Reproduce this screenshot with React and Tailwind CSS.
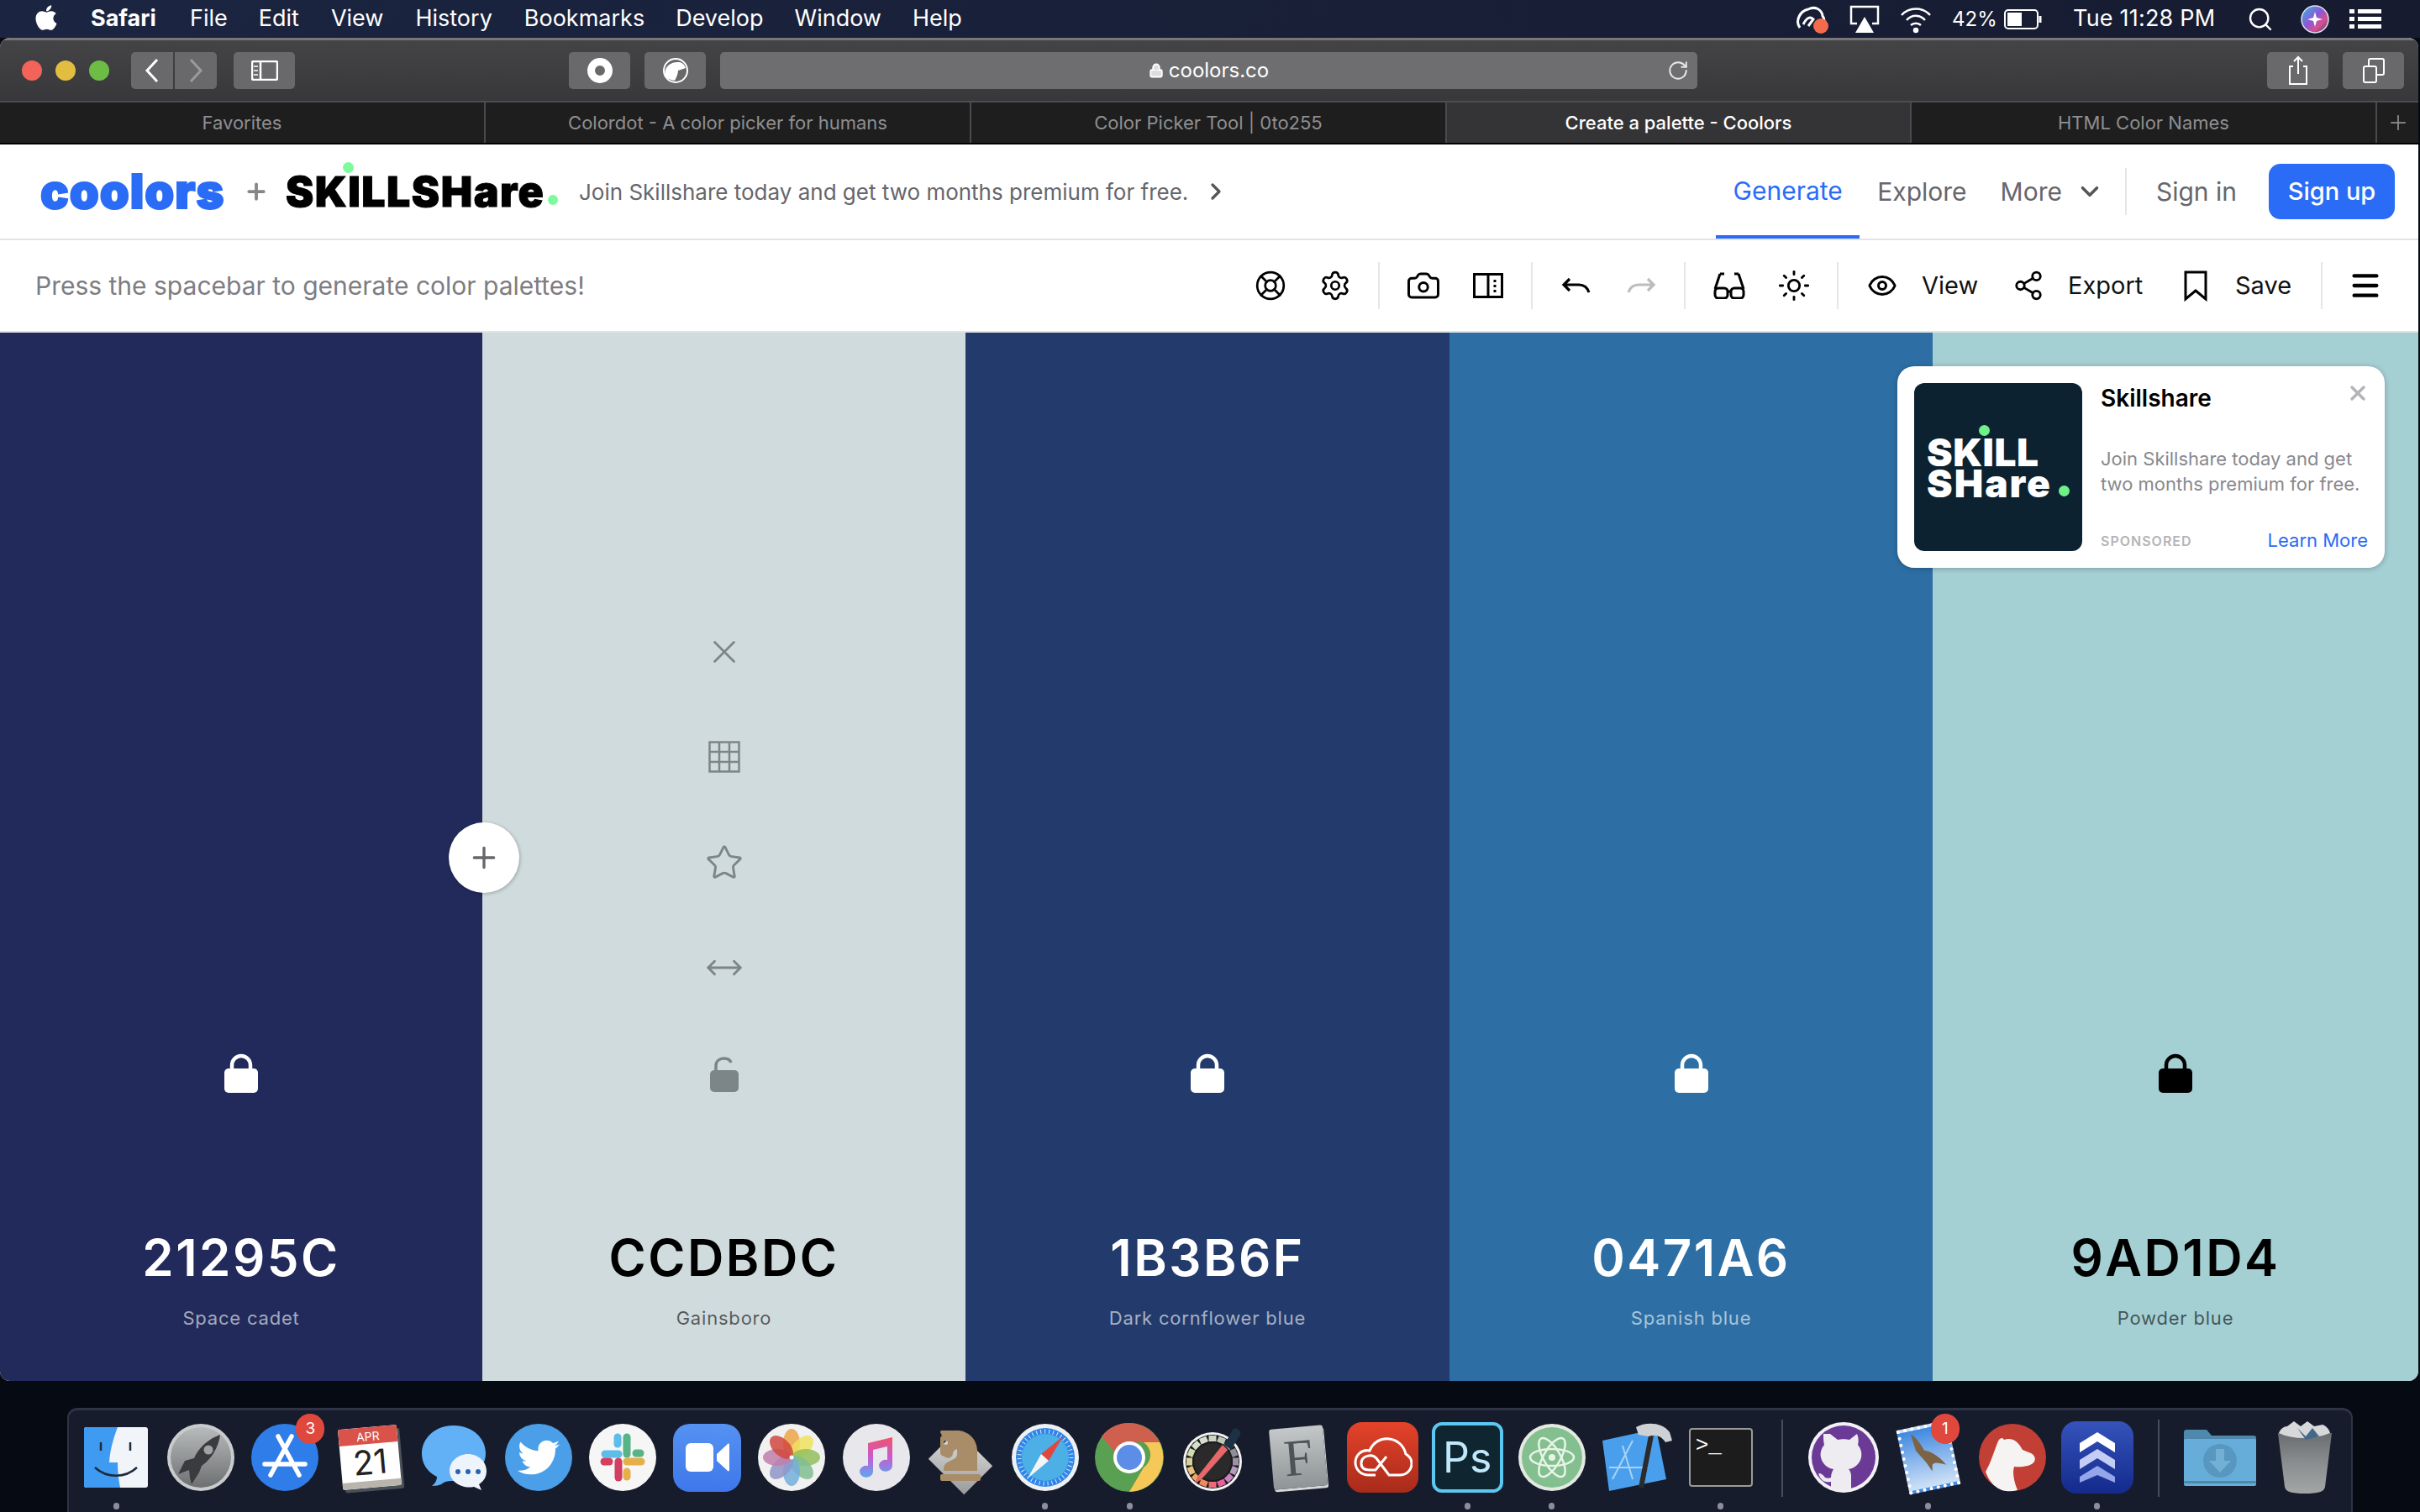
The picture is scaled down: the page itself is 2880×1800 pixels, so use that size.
import React from 'react';
import {
  Camera, ChevronDown, ChevronRight, Eye, LifeBuoy, Lock, Menu, MoveHorizontal, Plus,
  RotateCw, Search, Settings, Share2, Star, Sun, X,
} from 'lucide-react';
import { FaApple, FaChessKnight, FaTwitter } from 'react-icons/fa';

const menuItems = [
  ['File', 'ml-[37px]'], ['Edit', 'ml-[37px]'], ['View', 'ml-[38px]'], ['History', 'ml-[38px]'],
  ['Bookmarks', 'ml-[38px]'], ['Develop', 'ml-[37px]'], ['Window', 'ml-[37px]'], ['Help', 'ml-[37px]'],
];

const tabs = [
  ['Favorites', 'w-[578px]'],
  ['Colordot - A color picker for humans', 'w-[578px]'],
  ['Color Picker Tool | 0to255', 'w-[566px]'],
  ['Create a palette - Coolors', 'w-[553px]', true],
  ['HTML Color Names', 'w-[554px]'],
];

const colors = [
  { hex: '21295C', name: 'Space cadet', bg: 'bg-[#212a5a]', width: 'w-[574px]', hexText: 'text-white', nameText: 'text-white/60', lock: 'white' },
  { hex: 'CCDBDC', name: 'Gainsboro', bg: 'bg-[#d0dbdd]', width: 'w-[575px]', hexText: 'text-black', nameText: 'text-black/60', lock: 'open', tools: true },
  { hex: '1B3B6F', name: 'Dark cornflower blue', bg: 'bg-[#223b6c]', width: 'w-[576px]', hexText: 'text-white', nameText: 'text-white/60', lock: 'white' },
  { hex: '0471A6', name: 'Spanish blue', bg: 'bg-[#2d6fa4]', width: 'w-[575px]', hexText: 'text-white', nameText: 'text-white/60', lock: 'white' },
  { hex: '9AD1D4', name: 'Powder blue', bg: 'bg-[#a4cfd3]', width: 'flex-1', hexText: 'text-black', nameText: 'text-black/60', lock: 'black' },
];

function PadLock({ color = '#fff', open = false }) {
  return (
    <svg width="44" height="48" viewBox="0 0 44 48" fill="none">
      {open
        ? <path d="M12 22v-7c0-6 4.500-9 9.500-9 4 0 7.500 2 8.500 5" stroke={color} strokeWidth="3.500" />
        : <path d="M11 22v-8C11 8 16 3 22 3s11 5 11 11v8" stroke={color} strokeWidth="4.500" />}
      {open
        ? <rect x="5" y="20" width="34" height="26" rx="5" fill={color} />
        : <rect x="2" y="18" width="40" height="29" rx="5" fill={color} />}
    </svg>
  );
}

function Dot({ className }) {
  return <span className={`block h-[8px] w-[7px] rounded-full bg-[#8b8f9c] ${className || ''}`} />;
}

function Badge({ children }) {
  return (
    <span className="absolute right-[-6px] top-[-8px] flex h-[36px] w-[34px] items-center justify-center rounded-full bg-[#e0483d] text-[19px] text-white">
      {children}
    </span>
  );
}

function Finder() {
  return (
    <svg width="76" height="72" viewBox="0 0 76 72">
      <rect width="76" height="72" rx="3" fill="#f1f4f8" />
      <path d="M3 0h37c-6 16-9 28-10 42h10c0 10 1 20 3 30H3a3 3 0 0 1-3-3V3a3 3 0 0 1 3-3z" fill="#3f9bf2" />
      <path d="M20 18v10M55 18v10" stroke="#1c2b3d" strokeWidth="2.500" />
      <path d="M13 48c14 13 36 13 50 0" stroke="#1c2b3d" strokeWidth="2.500" fill="none" />
    </svg>
  );
}

function Rocket() {
  return (
    <svg width="82" height="82" viewBox="0 0 82 82">
      <defs>
        <linearGradient id="rocketBg" x1="0" y1="0" x2="0" y2="1">
          <stop offset="0" stopColor="#b8bbbc" /><stop offset="1" stopColor="#6d6f70" />
        </linearGradient>
      </defs>
      <circle cx="41" cy="41" r="40" fill="#c9cbcc" />
      <circle cx="41" cy="41" r="36" fill="url(#rocketBg)" />
      <path d="M64 14C50 19 38 30 33 42l-11 3-8 16 13-5 1 9 2 8 9-14 3-8c13-9 21-25 22-37z" fill="#3a3b3e" />
      <circle cx="50" cy="32" r="5.500" fill="#a0a2a4" />
    </svg>
  );
}

function AppStore() {
  return (
    <svg width="82" height="82" viewBox="0 0 82 82">
      <circle cx="41" cy="41" r="40" fill="#2f7de8" />
      <path d="M24 62l25-46M58 62L33 16M17 49h48" stroke="#fff" strokeWidth="5.500" strokeLinecap="round" />
    </svg>
  );
}

function Calendar() {
  return (
    <div className="relative h-[72px] w-[70px] rotate-[-5deg] overflow-hidden rounded-[2px] bg-white shadow-[3px_4px_0_#4a5058]">
      <div className="flex h-[20px] items-center justify-center bg-[#d9534a] text-[14px] text-white">APR</div>
      <div className="flex h-[44px] items-center justify-center text-[40px] leading-none text-[#222]">21</div>
      <div className="h-[8px] bg-[#b9b4ac]" />
    </div>
  );
}

function Messages() {
  return (
    <svg width="82" height="80" viewBox="0 0 82 80">
      <path d="M41 2c22 0 38 15 38 33S63 68 41 68c-4 0-8 0-12 2-4 3-8 4-14 4 4-3 6-7 6-11C9 57 3 47 3 35 3 17 19 2 41 2z" fill="#62b0f5" />
      <path d="M58 36c12 0 22 9 22 20 0 7-3 12-9 16l3 7-9-4c-14 3-29-6-29-19 0-11 10-20 22-20z" fill="#eef4fb" />
      <circle cx="46" cy="57" r="3" fill="#2a64b0" /><circle cx="58" cy="57" r="3" fill="#2a64b0" /><circle cx="70" cy="57" r="3" fill="#2a64b0" />
    </svg>
  );
}

function Twitter() {
  return (
    <div className="flex h-[80px] w-[80px] items-center justify-center rounded-full bg-[#4a9fe8]">
      <FaTwitter size={50} color="#fff" />
    </div>
  );
}

function Slack() {
  return (
    <svg width="82" height="82" viewBox="0 0 82 82">
      <circle cx="41" cy="41" r="40" fill="#f6f6f6" />
      <g strokeWidth="9" strokeLinecap="round" fill="none">
        <path d="M36 37H20" stroke="#5cbde8" /><path d="M35 17v8" stroke="#5cbde8" />
        <path d="M46 17v20" stroke="#58b386" /><path d="M62 36h-5" stroke="#58b386" />
        <path d="M46 46h17" stroke="#e5b04a" /><path d="M46 64v-6" stroke="#e5b04a" />
        <path d="M36 46v19" stroke="#d23f60" /><path d="M19 46h6" stroke="#d23f60" />
      </g>
    </svg>
  );
}

function Zoom() {
  return (
    <div className="flex h-[81px] w-[81px] items-center justify-center rounded-[20px] bg-gradient-to-b from-[#5592f2] to-[#3f77ea]">
      <svg width="52" height="38" viewBox="0 0 52 38">
        <rect x="0" y="2" width="33" height="34" rx="6" fill="#fff" />
        <path d="M37 15l13-12c1-1 2 0 2 1v30c0 1-1 2-2 1L37 23z" fill="#fff" />
      </svg>
    </div>
  );
}

function Photos() {
  const petals = ['#eda44a', '#eee25e', '#93bf5c', '#7fbd92', '#74aedb', '#8f95c8', '#c17eab', '#d0483f'];
  return (
    <svg width="82" height="82" viewBox="0 0 82 82">
      <circle cx="41" cy="41" r="40" fill="#f1f1f1" />
      {petals.map((c, i) => (
        <ellipse key={c} cx="41" cy="24" rx="10" ry="17" fill={c} fillOpacity="0.85" transform={`rotate(${i * 45} 41 41)`} />
      ))}
      <circle cx="41" cy="41" r="2.500" fill="#fff" />
    </svg>
  );
}

function Music() {
  return (
    <svg width="82" height="82" viewBox="0 0 82 82">
      <defs>
        <linearGradient id="musicNote" x1="0" y1="0" x2="0" y2="1">
          <stop offset="0" stopColor="#f0536b" /><stop offset="0.5" stopColor="#c65bd0" /><stop offset="1" stopColor="#5aa9f2" />
        </linearGradient>
      </defs>
      <circle cx="41" cy="41" r="40" fill="#e8e8ec" />
      <path d="M31 24l29-7v34a8 7 0 1 1-6-7V28l-17 4v26a8 7 0 1 1-6-7z" fill="url(#musicNote)" />
    </svg>
  );
}

function Chess() {
  return (
    <div className="relative flex h-[84px] w-[88px] items-center justify-center">
      <span className="absolute bottom-[6px] h-[60px] w-[60px] rotate-45 scale-y-[0.8] bg-gradient-to-br from-[#e4e4e4] to-[#9a9a9a]" />
      <FaChessKnight size={64} color="#a88d68" className="relative mt-[-8px]" />
    </div>
  );
}

function SafariIcon() {
  return (
    <svg width="82" height="82" viewBox="0 0 82 82">
      <circle cx="41" cy="41" r="40" fill="#eef1f4" />
      <circle cx="41" cy="41" r="35" fill="#2f85e8" />
      <circle cx="41" cy="41" r="28" fill="#4cb0e6" />
      <circle cx="41" cy="41" r="31" fill="none" stroke="#d8ecfa" strokeWidth="5" strokeDasharray="1 4" />
      <path d="M62 16L36 37l9 8z" fill="#e0473f" />
      <path d="M20 66l16-29 9 8z" fill="#f5f5f5" />
    </svg>
  );
}

function Chrome() {
  return (
    <svg width="84" height="84" viewBox="0 0 84 84">
      <circle cx="42" cy="42" r="41" fill="#5aa052" />
      <path d="M42 1a41 41 0 0 1 36 23H42a18 18 0 0 0-17 12L9 17A41 41 0 0 1 42 1z" fill="#cf5f4e" />
      <path d="M78 24a41 41 0 0 1-36 59l17-29a18 18 0 0 0 0-30z" fill="#f5c857" />
      <circle cx="42" cy="42" r="19" fill="#fff" />
      <circle cx="42" cy="42" r="15" fill="#5c8ee8" />
    </svg>
  );
}

function ColorSnapper() {
  const swatches = ['#c9d6c6', '#b9c8b8', '#a9b5b0', '#8f8f99', '#9a93a8', '#b39cc0', '#c983bd', '#e6609a', '#ee6a78', '#ef8a5a', '#f0a860', '#e8c27a', '#d8d29a', '#cfdcb0', '#d5e0c8', '#d9dfd0'];
  return (
    <svg width="76" height="82" viewBox="0 0 76 82">
      <circle cx="36" cy="46" r="35" fill="#f2f2f2" />
      <circle cx="36" cy="46" r="32" fill="#1c1c1d" />
      {swatches.map((c, i) => (
        <path key={i} d="M36 22V15" stroke={c} strokeWidth="9" transform={`rotate(${i * 22.500} 36 46)`} />
      ))}
      <circle cx="36" cy="46" r="22" fill="#2a2a2b" />
      <path d="M48 26L18 64l-3 7 7-3 32-36z" fill="#e7676b" />
      <path d="M50 26l10-18c3-4 11 1 9 6L58 32z" fill="#1d3145" />
    </svg>
  );
}

function FontBook() {
  return (
    <div className="flex h-[72px] w-[64px] rotate-[-5deg] items-center justify-center rounded-[3px] bg-gradient-to-b from-[#c4c8c9] to-[#8f9496] font-['Liberation_Serif',serif] text-[62px] leading-none text-[#4d5356] shadow-[1px_3px_0_#d5d7d8]">
      F
    </div>
  );
}

function CreativeCloud() {
  return (
    <div className="flex h-[84px] w-[85px] items-center justify-center rounded-[18px] bg-gradient-to-b from-[#e5432a] to-[#a82b1a]">
      <svg width="70" height="50" viewBox="0 0 70 50" fill="none" stroke="#fff" strokeWidth="3">
        <path d="M26 46H18C8 46 2 39 2 31c0-9 8-16 17-14C23 7 32 2 42 3c11 1 18 9 20 18 5 3 7 7 7 11 0 8-6 14-14 14H42L27 26c-5-6-18-3-18 6 0 7 6 8 10 8h7l13-16" />
      </svg>
    </div>
  );
}

function Photoshop() {
  return (
    <div className="flex h-[84px] w-[85px] items-center justify-center rounded-[12px] border-[4px] border-[#5cc8f2] bg-[#0f2530] font-['Inter',sans-serif] text-[50px] leading-none text-[#bfe9fa]">
      Ps
    </div>
  );
}

function Atom() {
  return (
    <svg width="80" height="82" viewBox="0 0 80 82">
      <circle cx="40" cy="41" r="40" fill="#e4e9e1" />
      <circle cx="40" cy="41" r="36" fill="#84c08f" />
      <g fill="none" stroke="#e7f4e8" strokeWidth="2.500">
        <ellipse cx="40" cy="41" rx="26" ry="10" />
        <ellipse cx="40" cy="41" rx="26" ry="10" transform="rotate(60 40 41)" />
        <ellipse cx="40" cy="41" rx="26" ry="10" transform="rotate(120 40 41)" />
      </g>
      <circle cx="40" cy="41" r="4" fill="#e7f4e8" />
    </svg>
  );
}

function Xcode() {
  return (
    <svg width="92" height="84" viewBox="0 0 92 84">
      <path d="M6 22L70 8l12 60-68 14z" fill="#4a9fec" />
      <path d="M18 68L42 22M42 68L30 28M14 54h46" stroke="#a9d3f5" strokeWidth="2" fill="none" />
      <path d="M52 78L64 16" stroke="#2b2b2d" strokeWidth="6" />
      <path d="M46 6c12-7 32-6 40 6l3 10-8 2c-5-8-12-10-20-7l-12-2z" fill="#cfd2d4" />
    </svg>
  );
}

function Terminal() {
  return (
    <div className="flex h-[70px] w-[76px] flex-col rounded-[4px] border-[2px] border-[#9a9a9a] bg-[#1c1c1c] pl-[6px] pt-[6px] font-['Liberation_Mono',monospace] text-[26px] leading-none text-white">
      &gt;_
    </div>
  );
}

function GitHubDesktop() {
  return (
    <svg width="86" height="84" viewBox="0 0 86 84">
      <circle cx="43" cy="42" r="42" fill="#f3f0f6" />
      <circle cx="43" cy="42" r="38" fill="#6a3a96" />
      <path d="M27 14l9 7c4-1 10-1 14 0l9-7c2 5 2 9 1 13 4 5 5 10 4 15-2 9-9 13-15 14 2 2 3 5 3 8v16c-5 2-19 2-24 0v-9c-6 1-12 0-15-10 4 0 6 2 8 5 2 1 5 1 7 0 0-3 1-7 3-10-6-1-13-5-15-14-1-5 0-10 4-15-1-4-1-8-1-13z" fill="#efecf1" />
    </svg>
  );
}

function Mail() {
  return (
    <div className="relative h-[78px] w-[62px] rotate-[-12deg] border-[4px] border-dotted border-white bg-gradient-to-b from-[#3f88e0] to-[#cfe2f5]">
      <svg width="54" height="70" viewBox="0 0 54 70" className="absolute left-0 top-0">
        <path d="M12 4c6 4 9 14 12 22 6 2 14 8 22 22-8-4-12-6-16-4l-2 8-4-10-10-18z" fill="#7d6244" />
      </svg>
    </div>
  );
}

function Bear() {
  return (
    <svg width="80" height="82" viewBox="0 0 80 82">
      <circle cx="40" cy="41" r="40" fill="#c23f35" />
      <path d="M8 58c6-10 10-24 14-34 2-6 6-8 8-4 8-3 16 0 22 12l10 4c4 2 6 6 4 10-3 5-13 7-24 6-2 6-1 16 4 28-14 4-30 0-38-22z" fill="#f6f4f2" />
    </svg>
  );
}

function StackIcon() {
  return (
    <div className="flex h-[86px] w-[86px] flex-col items-center justify-center rounded-[18px] bg-gradient-to-b from-[#3553bb] to-[#142a8c]">
      <svg width="42" height="60" viewBox="0 0 42 60">
        <path d="M21 0l21 13v11L21 11 0 24V13z" fill="#fff" />
        <path d="M21 20l21 13v11L21 31 0 44V33z" fill="#c4cdf5" />
        <path d="M21 40l21 13v7L21 51 0 60v-7z" fill="#94a5ea" />
      </svg>
    </div>
  );
}

function Downloads() {
  return (
    <svg width="86" height="68" viewBox="0 0 86 68">
      <path d="M0 4a3 3 0 0 1 3-3h24l6 7h50a3 3 0 0 1 3 3v6H0z" fill="#4e88ac" />
      <rect y="12" width="86" height="56" rx="2" fill="#67add9" />
      <rect y="62" width="86" height="3" fill="#4e88ac" />
      <circle cx="43" cy="38" r="20" fill="#5897c0" />
      <path d="M38 24h10v14h8L43 52 30 38h8z" fill="#73b0d5" />
    </svg>
  );
}

function Trash() {
  return (
    <svg width="66" height="86" viewBox="0 0 66 86">
      <defs>
        <linearGradient id="trashBody" x1="0" y1="0" x2="0" y2="1">
          <stop offset="0" stopColor="#6a6d70" /><stop offset="0.5" stopColor="#8b8e90" /><stop offset="1" stopColor="#a3a5a6" />
        </linearGradient>
      </defs>
      <path d="M1 14h64l-8 64c-1 6-8 8-24 8s-23-2-24-8z" fill="url(#trashBody)" />
      <path d="M2 14c2-5 6-8 10-8l8-6 8 6 8-6 8 6 10-2c5 2 8 6 9 10-20 8-44 8-61 0z" fill="#d6d8da" />
      <path d="M24 8l10 10 8-10 8 10-16 4z" fill="#43698a" />
    </svg>
  );
}

const dockBefore = [
  { Icon: Finder, dot: true }, { Icon: Rocket }, { Icon: AppStore, badge: '3' }, { Icon: Calendar },
  { Icon: Messages }, { Icon: Twitter }, { Icon: Slack }, { Icon: Zoom }, { Icon: Photos }, { Icon: Music },
  { Icon: Chess }, { Icon: SafariIcon, dot: true }, { Icon: Chrome, dot: true }, { Icon: ColorSnapper },
  { Icon: FontBook }, { Icon: CreativeCloud }, { Icon: Photoshop, dot: true }, { Icon: Atom, dot: true },
  { Icon: Xcode }, { Icon: Terminal, dot: true },
];
const dockMiddle = [
  { Icon: GitHubDesktop }, { Icon: Mail, dot: true, badge: '1' }, { Icon: Bear }, { Icon: StackIcon, dot: true },
];
const dockAfter = [{ Icon: Downloads }, { Icon: Trash }];

function DockItem({ Icon, dot, badge }) {
  return (
    <div className="flex w-[100.500px] flex-col items-center">
      <div className="relative flex h-[88px] items-center justify-center">
        <Icon />
        {badge && <Badge>{badge}</Badge>}
      </div>
      <div className="mt-[10px] h-[8px]">{dot && <Dot />}</div>
    </div>
  );
}

function DockSeparator() {
  return (
    <div className="flex w-[46px] justify-center">
      <span className="mt-[-1px] block h-[92px] w-[2px] bg-[#484d5c]" />
    </div>
  );
}

function ToolIcon({ children }) {
  return <span className="flex w-[77px] items-center justify-center text-black">{children}</span>;
}

function ToolSep({ width = 'w-[28px]' }) {
  return (
    <span className={`flex justify-center ${width}`}>
      <span className="block h-[56px] w-[2px] bg-[#e6e6e6]" />
    </span>
  );
}

function ToolLabel({ children, width }) {
  return <span className={`pl-[9px] text-[29px] text-[#111] ${width}`}>{children}</span>;
}

function ChromeBtn({ width = 'w-[73px]', className = '', children }) {
  return (
    <span className={`flex h-[44px] items-center justify-center rounded-[5px] bg-[#69696b] ${width} ${className}`}>
      {children}
    </span>
  );
}

export default function App() {
  return (
    <div className="relative flex h-[1800px] w-[2880px] flex-col overflow-hidden bg-[#060a12] font-['Inter',sans-serif]">
      {/* macOS menu bar */}
      <div className="flex h-[45px] shrink-0 items-center bg-gradient-to-r from-[#1b2541] to-[#161b30] text-[27px] text-white">
        <FaApple size={34} className="ml-[38px] mt-[-4px]" />
        <span className="ml-[36px] w-[81px] font-bold">Safari</span>
        {menuItems.map(([label, gap]) => <span key={label} className={gap}>{label}</span>)}
        <div className="ml-auto flex items-center">
          <svg width="40" height="36" viewBox="0 0 40 36" className="mr-[25px]">
            <path d="M6 28C0 20 6 8 16 6c8-4 16 0 17 8 3 4 2 8 0 10" fill="none" stroke="#fff" strokeWidth="3" />
            <path d="M10 24c4-8 8-10 12-6l-6 8" fill="none" stroke="#fff" strokeWidth="3" />
            <circle cx="31" cy="26" r="9" fill="#f56a4d" />
          </svg>
          <svg width="36" height="34" viewBox="0 0 36 34" className="mr-[24px]" fill="none">
            <path d="M9 22H2V2h32v20h-7" stroke="#fff" strokeWidth="2.500" />
            <path d="M18 14l11 19H7z" fill="#fff" />
          </svg>
          <svg width="38" height="34" viewBox="0 0 38 34" className="mr-[24px]" fill="none" stroke="#fff" strokeWidth="2.500">
            <path d="M2 12c9-10 25-10 34 0M8 18c6-7 16-7 22 0M13 24c3-3 9-3 12 0" />
            <circle cx="19" cy="30" r="2" fill="#fff" />
          </svg>
          <span className="w-[62px] text-[24px]">42%</span>
          <svg width="46" height="26" viewBox="0 0 46 26" className="mr-[36px]" fill="none">
            <rect x="1" y="2" width="39" height="22" rx="4" stroke="#fff" strokeWidth="2" />
            <rect x="4" y="5" width="17" height="16" fill="#fff" />
            <path d="M43 9v8" stroke="#fff" strokeWidth="3" />
          </svg>
          <span className="w-[207px] tracking-[0.2px]">Tue 11:28 PM</span>
          <Search size={32} strokeWidth={1.800} className="mr-[32px]" />
          <svg width="34" height="34" viewBox="0 0 34 34" className="mr-[24px]">
            <defs>
              <linearGradient id="siri" x1="0" y1="0" x2="1" y2="1">
                <stop offset="0" stopColor="#35b8e4" /><stop offset="0.45" stopColor="#8a58d8" /><stop offset="0.7" stopColor="#d8508c" /><stop offset="1" stopColor="#2f3f88" />
              </linearGradient>
            </defs>
            <circle cx="17" cy="17" r="16" fill="url(#siri)" stroke="#dfe3ee" strokeWidth="1.500" />
            <path d="M17 8l2 7 7 2-7 2-2 7-2-7-7-2 7-2z" fill="#fff" />
          </svg>
          <svg width="38" height="26" viewBox="0 0 38 26" className="mr-[46px]" fill="#fff">
            <rect x="0" y="1" width="6" height="5" /><rect x="10" y="1" width="28" height="5" />
            <rect x="0" y="10" width="6" height="5" /><rect x="10" y="10" width="28" height="5" />
            <rect x="0" y="19" width="6" height="5" /><rect x="10" y="19" width="28" height="5" />
          </svg>
        </div>
      </div>

      {/* Safari window */}
      <div className="flex h-[1599px] w-[2878px] shrink-0 flex-col overflow-hidden rounded-[12px] bg-white">
        <div className="flex h-[75px] shrink-0 items-center border-t-[3px] border-[#77777a] bg-gradient-to-b from-[#444447] to-[#38383a]">
          <span className="ml-[26px] h-[24px] w-[24px] rounded-full bg-[#f2645a]" />
          <span className="ml-[16px] h-[24px] w-[24px] rounded-full bg-[#e1bd42]" />
          <span className="ml-[16px] h-[24px] w-[24px] rounded-full bg-[#6dbc45]" />
          <ChromeBtn width="w-[50px]" className="ml-[26px] rounded-r-none">
            <svg width="18" height="30" viewBox="0 0 18 30" fill="none" stroke="#fff" strokeWidth="3"><path d="M15 2L3 15l12 13" /></svg>
          </ChromeBtn>
          <ChromeBtn width="w-[50px]" className="ml-[2px] rounded-l-none">
            <svg width="18" height="30" viewBox="0 0 18 30" fill="none" stroke="#9a9a9c" strokeWidth="3"><path d="M3 2l12 13L3 28" /></svg>
          </ChromeBtn>
          <ChromeBtn className="ml-[20px]">
            <svg width="32" height="24" viewBox="0 0 32 24" fill="none" stroke="#fff" strokeWidth="2.500">
              <rect x="1" y="1" width="30" height="22" rx="2" /><path d="M11 1v22" />
              <path d="M3 7h5M3 12h5M3 17h5" strokeWidth="1.500" />
            </svg>
          </ChromeBtn>
          <ChromeBtn className="ml-[326px]">
            <span className="block h-[30px] w-[30px] rounded-full border-[9px] border-white" />
          </ChromeBtn>
          <ChromeBtn className="ml-[17px]">
            <svg width="34" height="30" viewBox="0 0 34 30">
              <circle cx="17" cy="15" r="14" fill="none" stroke="#fff" strokeWidth="2" />
              <path d="M5 22C2 10 12 4 22 5c4 1 6 4 7 7l-9 3c0 4-2 8-4 12-5-1-9-2-11-5z" fill="#fff" />
            </svg>
          </ChromeBtn>
          <div className="relative ml-[17px] flex h-[44px] w-[1163px] items-center justify-center rounded-[5px] bg-[#6e6e70] text-[24px] text-white">
            <Lock size={18} strokeWidth={2.500} className="mr-[6px]" fill="#ddd" />
            coolors.co
            <RotateCw size={26} strokeWidth={1.800} color="#e8e8e8" className="absolute right-[10px]" />
          </div>
          <ChromeBtn className="ml-[678px]">
            <svg width="24" height="36" viewBox="0 0 24 36" fill="none" stroke="#fff" strokeWidth="2">
              <path d="M6 13H2v21h20V13h-4M12 22V2M7 7l5-5 5 5" />
            </svg>
          </ChromeBtn>
          <ChromeBtn className="ml-[17px]">
            <svg width="28" height="30" viewBox="0 0 28 30" fill="none" stroke="#fff" strokeWidth="2">
              <rect x="2" y="10" width="15" height="19" rx="2" /><path d="M8 10V3a2 2 0 0 1 2-2h14a2 2 0 0 1 2 2v15a2 2 0 0 1-2 2h-7" />
            </svg>
          </ChromeBtn>
        </div>

        <div className="flex h-[52px] shrink-0 border-y-[2px] border-y-[#4d4d50] border-b-black bg-[#1e1e1f] text-[22px] text-[#8f8f91]">
          {tabs.map(([label, width, active]) => (
            <div
              key={label}
              className={`flex items-center justify-center border-r-[2px] border-[#4a4a4c] ${width} ${active ? 'bg-[#343436] font-medium text-white' : ''}`}
            >
              {label}
            </div>
          ))}
          <div className="flex flex-1 items-center justify-center">
            <Plus size={28} strokeWidth={1.500} color="#8f8f91" />
          </div>
        </div>

        {/* Coolors nav */}
        <div className="flex h-[114px] shrink-0 items-center border-b-[2px] border-[#e3e3e3] bg-white">
          <span className="ml-[48px] w-[222px] text-[56px] font-black leading-none tracking-[1px] text-[#2a6cf6] [-webkit-text-stroke:2px_#2a6cf6]">coolors</span>
          <Plus size={30} strokeWidth={3} color="#85858a" className="ml-[20px]" />
          <span className="relative ml-[20px] w-[330px] text-[50px] font-black leading-none tracking-[1.500px] text-black [-webkit-text-stroke:1px_#000]">
            SKILLSHare
            <span className="absolute left-[68px] top-[-10px] h-[13px] w-[13px] rounded-full bg-[#7dfb9c]" />
            <span className="absolute left-[312px] top-[29px] h-[12px] w-[12px] rounded-full bg-[#7dfb9c]" />
          </span>
          <span className="ml-[19px] text-[26px] text-[#66666b]">Join Skillshare today and get two months premium for free.</span>
          <ChevronRight size={32} strokeWidth={2.500} color="#55555a" className="ml-[17px]" />
          <div className="ml-auto flex h-full items-center">
            <span className="flex h-full w-[171px] items-center justify-center border-b-[4px] border-[#2a6cf6] pt-[3px] text-[30px] text-[#2a6cf6]">Generate</span>
            <span className="ml-[21px] text-[30px] text-[#66666b]">Explore</span>
            <span className="ml-[40px] text-[30px] text-[#66666b]">More</span>
            <ChevronDown size={34} strokeWidth={2.500} color="#55555a" className="ml-[16px]" />
            <span className="ml-[25px] block h-[56px] w-[2px] bg-[#e6e6e6]" />
            <span className="ml-[35px] text-[30px] text-[#66666b]">Sign in</span>
            <span className="ml-[38px] mr-[28px] flex h-[66px] w-[150px] items-center justify-center rounded-[14px] bg-[#2a6cf6] text-[29px] font-medium text-white">Sign up</span>
          </div>
        </div>

        {/* Toolbar */}
        <div className="flex h-[110px] shrink-0 items-center border-b-[2px] border-[#e3e3e3] bg-white">
          <span className="ml-[42px] text-[30px] text-[#7d7d82]">Press the spacebar to generate color palettes!</span>
          <div className="ml-auto flex items-center pr-[25px]">
            <ToolIcon><LifeBuoy size={38} strokeWidth={1.700} /></ToolIcon>
            <ToolIcon><Settings size={38} strokeWidth={1.700} /></ToolIcon>
            <ToolSep />
            <ToolIcon><Camera size={42} strokeWidth={1.700} /></ToolIcon>
            <ToolIcon>
              <svg width="36" height="30" viewBox="0 0 36 30" fill="none" stroke="#000" strokeWidth="3">
                <rect x="1.500" y="1.500" width="33" height="27" /><path d="M18 1v28" />
                <path d="M26 8v3M26 14v3M26 20v3" strokeWidth="3" />
              </svg>
            </ToolIcon>
            <ToolSep />
            <ToolIcon>
              <svg width="36" height="20" viewBox="0 0 36 20" fill="none" stroke="#000" strokeWidth="3.200">
                <path d="M10 2L3 9l7 7M3 9h18c6 0 10 3 12 9" />
              </svg>
            </ToolIcon>
            <ToolIcon>
              <svg width="36" height="20" viewBox="0 0 36 20" fill="none" stroke="#bcbcbc" strokeWidth="3.200">
                <path d="M26 2l7 7-7 7M33 9H15C9 9 5 12 3 18" />
              </svg>
            </ToolIcon>
            <ToolSep />
            <ToolIcon>
              <svg width="38" height="32" viewBox="0 0 38 32" fill="none" stroke="#000" strokeWidth="3">
                <path d="M8 2L2 20M30 2l6 18M8 2h5M25 2h5" />
                <rect x="2" y="19" width="15" height="12" rx="4" /><rect x="21" y="19" width="15" height="12" rx="4" />
                <path d="M17 23h4" />
              </svg>
            </ToolIcon>
            <ToolIcon><Sun size={40} strokeWidth={1.700} /></ToolIcon>
            <ToolSep />
            <ToolIcon><Eye size={36} strokeWidth={2} /></ToolIcon>
            <ToolLabel width="w-[97px]">View</ToolLabel>
            <ToolIcon><Share2 size={38} strokeWidth={1.800} /></ToolIcon>
            <ToolLabel width="w-[122px]">Export</ToolLabel>
            <ToolIcon>
              <svg width="30" height="37" viewBox="0 0 30 37" fill="none" stroke="#000" strokeWidth="3">
                <path d="M3 2h24v32L15 24 3 34z" />
              </svg>
            </ToolIcon>
            <ToolLabel width="w-[99px]">Save</ToolLabel>
            <ToolSep width="w-[26px]" />
            <ToolIcon><Menu size={40} strokeWidth={2.600} /></ToolIcon>
          </div>
        </div>

        {/* Palette columns */}
        <div className="relative flex min-h-0 flex-1">
          {colors.map((c) => (
            <div key={c.hex} className={`flex flex-col items-center justify-end pb-[59px] ${c.width} ${c.bg}`}>
              {c.tools && (
                <div className="flex flex-col items-center text-[#7c8587]">
                  <span className="flex h-[125.500px] items-center"><X size={46} strokeWidth={1.400} /></span>
                  <span className="flex h-[125.500px] items-center">
                    <svg width="38" height="38" viewBox="0 0 38 38" fill="none" stroke="#7c8587" strokeWidth="2.500">
                      <rect x="1.500" y="1.500" width="35" height="35" /><path d="M13 1v36M25 1v36M1 13h36M1 25h36" />
                    </svg>
                  </span>
                  <span className="flex h-[125.500px] items-center"><Star size={46} strokeWidth={1.500} /></span>
                  <span className="flex h-[125.500px] items-center"><MoveHorizontal size={46} strokeWidth={1.500} /></span>
                </div>
              )}
              <span className="flex h-[125px] items-center">
                {c.lock === 'white' && <PadLock color="#fff" />}
                {c.lock === 'black' && <PadLock color="#000" />}
                {c.lock === 'open' && <PadLock color="#7c8587" open />}
              </span>
              <span className={`mt-[117px] h-[80px] text-[60px] font-semibold leading-[80px] tracking-[2.500px] ${c.hexText}`}>{c.hex}</span>
              <span className={`mt-[16px] h-[32px] text-[22px] leading-[32px] tracking-[0.800px] ${c.nameText}`}>{c.name}</span>
            </div>
          ))}

          {/* add-color button sits over the first seam */}
          <span className="absolute left-[534px] top-[583px] flex h-[84px] w-[84px] items-center justify-center rounded-full bg-white text-[#66666c] shadow-[1px_1px_4px_rgba(0,0,0,0.25)]">
            <Plus size={40} strokeWidth={2} />
          </span>

          {/* Skillshare ad */}
          <div className="absolute left-[2258px] top-[40px] flex h-[240px] w-[580px] rounded-[20px] bg-white p-[20px] shadow-[0_1px_6px_rgba(0,0,0,0.25)]">
            <div className="relative flex h-[200px] w-[200px] shrink-0 flex-col justify-center gap-[2px] rounded-[12px] bg-[#0c2231] pl-[15px] pt-[2px] text-[46px] font-black leading-[35px] tracking-[0.500px] text-white">
              <span className="h-[35px]">SKILL</span>
              <span className="h-[35px] tracking-[2px]">SHare</span>
              <span className="absolute left-[77px] top-[50px] h-[13px] w-[13px] rounded-full bg-[#6ef08a]" />
              <span className="absolute left-[172px] top-[122px] h-[13px] w-[13px] rounded-full bg-[#6ef08a]" />
            </div>
            <div className="ml-[22px] flex min-w-0 flex-1 flex-col">
              <div className="flex items-start justify-between">
                <span className="text-[28px] font-semibold leading-[36px] text-black">Skillshare</span>
                <X size={28} strokeWidth={3} color="#b4b4b8" className="mt-[-2px] mr-[-2px]" />
              </div>
              <p className="mt-[39px] text-[22px] leading-[30px] text-[#88888d]">Join Skillshare today and get two months premium for free.</p>
              <div className="mt-auto flex items-end justify-between">
                <span className="text-[16px] font-semibold tracking-[1px] text-[#b4b4b8]">SPONSORED</span>
                <span className="text-[22px] leading-[26px] text-[#2a6cf6]">Learn More</span>
              </div>
            </div>
          </div>
        </div>
      </div>

      {/* Dock */}
      <div className="ml-[80px] mt-[32px] flex h-[124px] w-[2720px] rounded-t-[12px] border-x-[2px] border-t-[3px] border-[#2e3345] bg-[#171c2c] pl-[6px] pt-[12px]">
        {dockBefore.map((item, i) => <DockItem key={i} {...item} />)}
        <DockSeparator />
        {dockMiddle.map((item, i) => <DockItem key={i} {...item} />)}
        <DockSeparator />
        {dockAfter.map((item, i) => <DockItem key={i} {...item} />)}
      </div>
    </div>
  );
}
